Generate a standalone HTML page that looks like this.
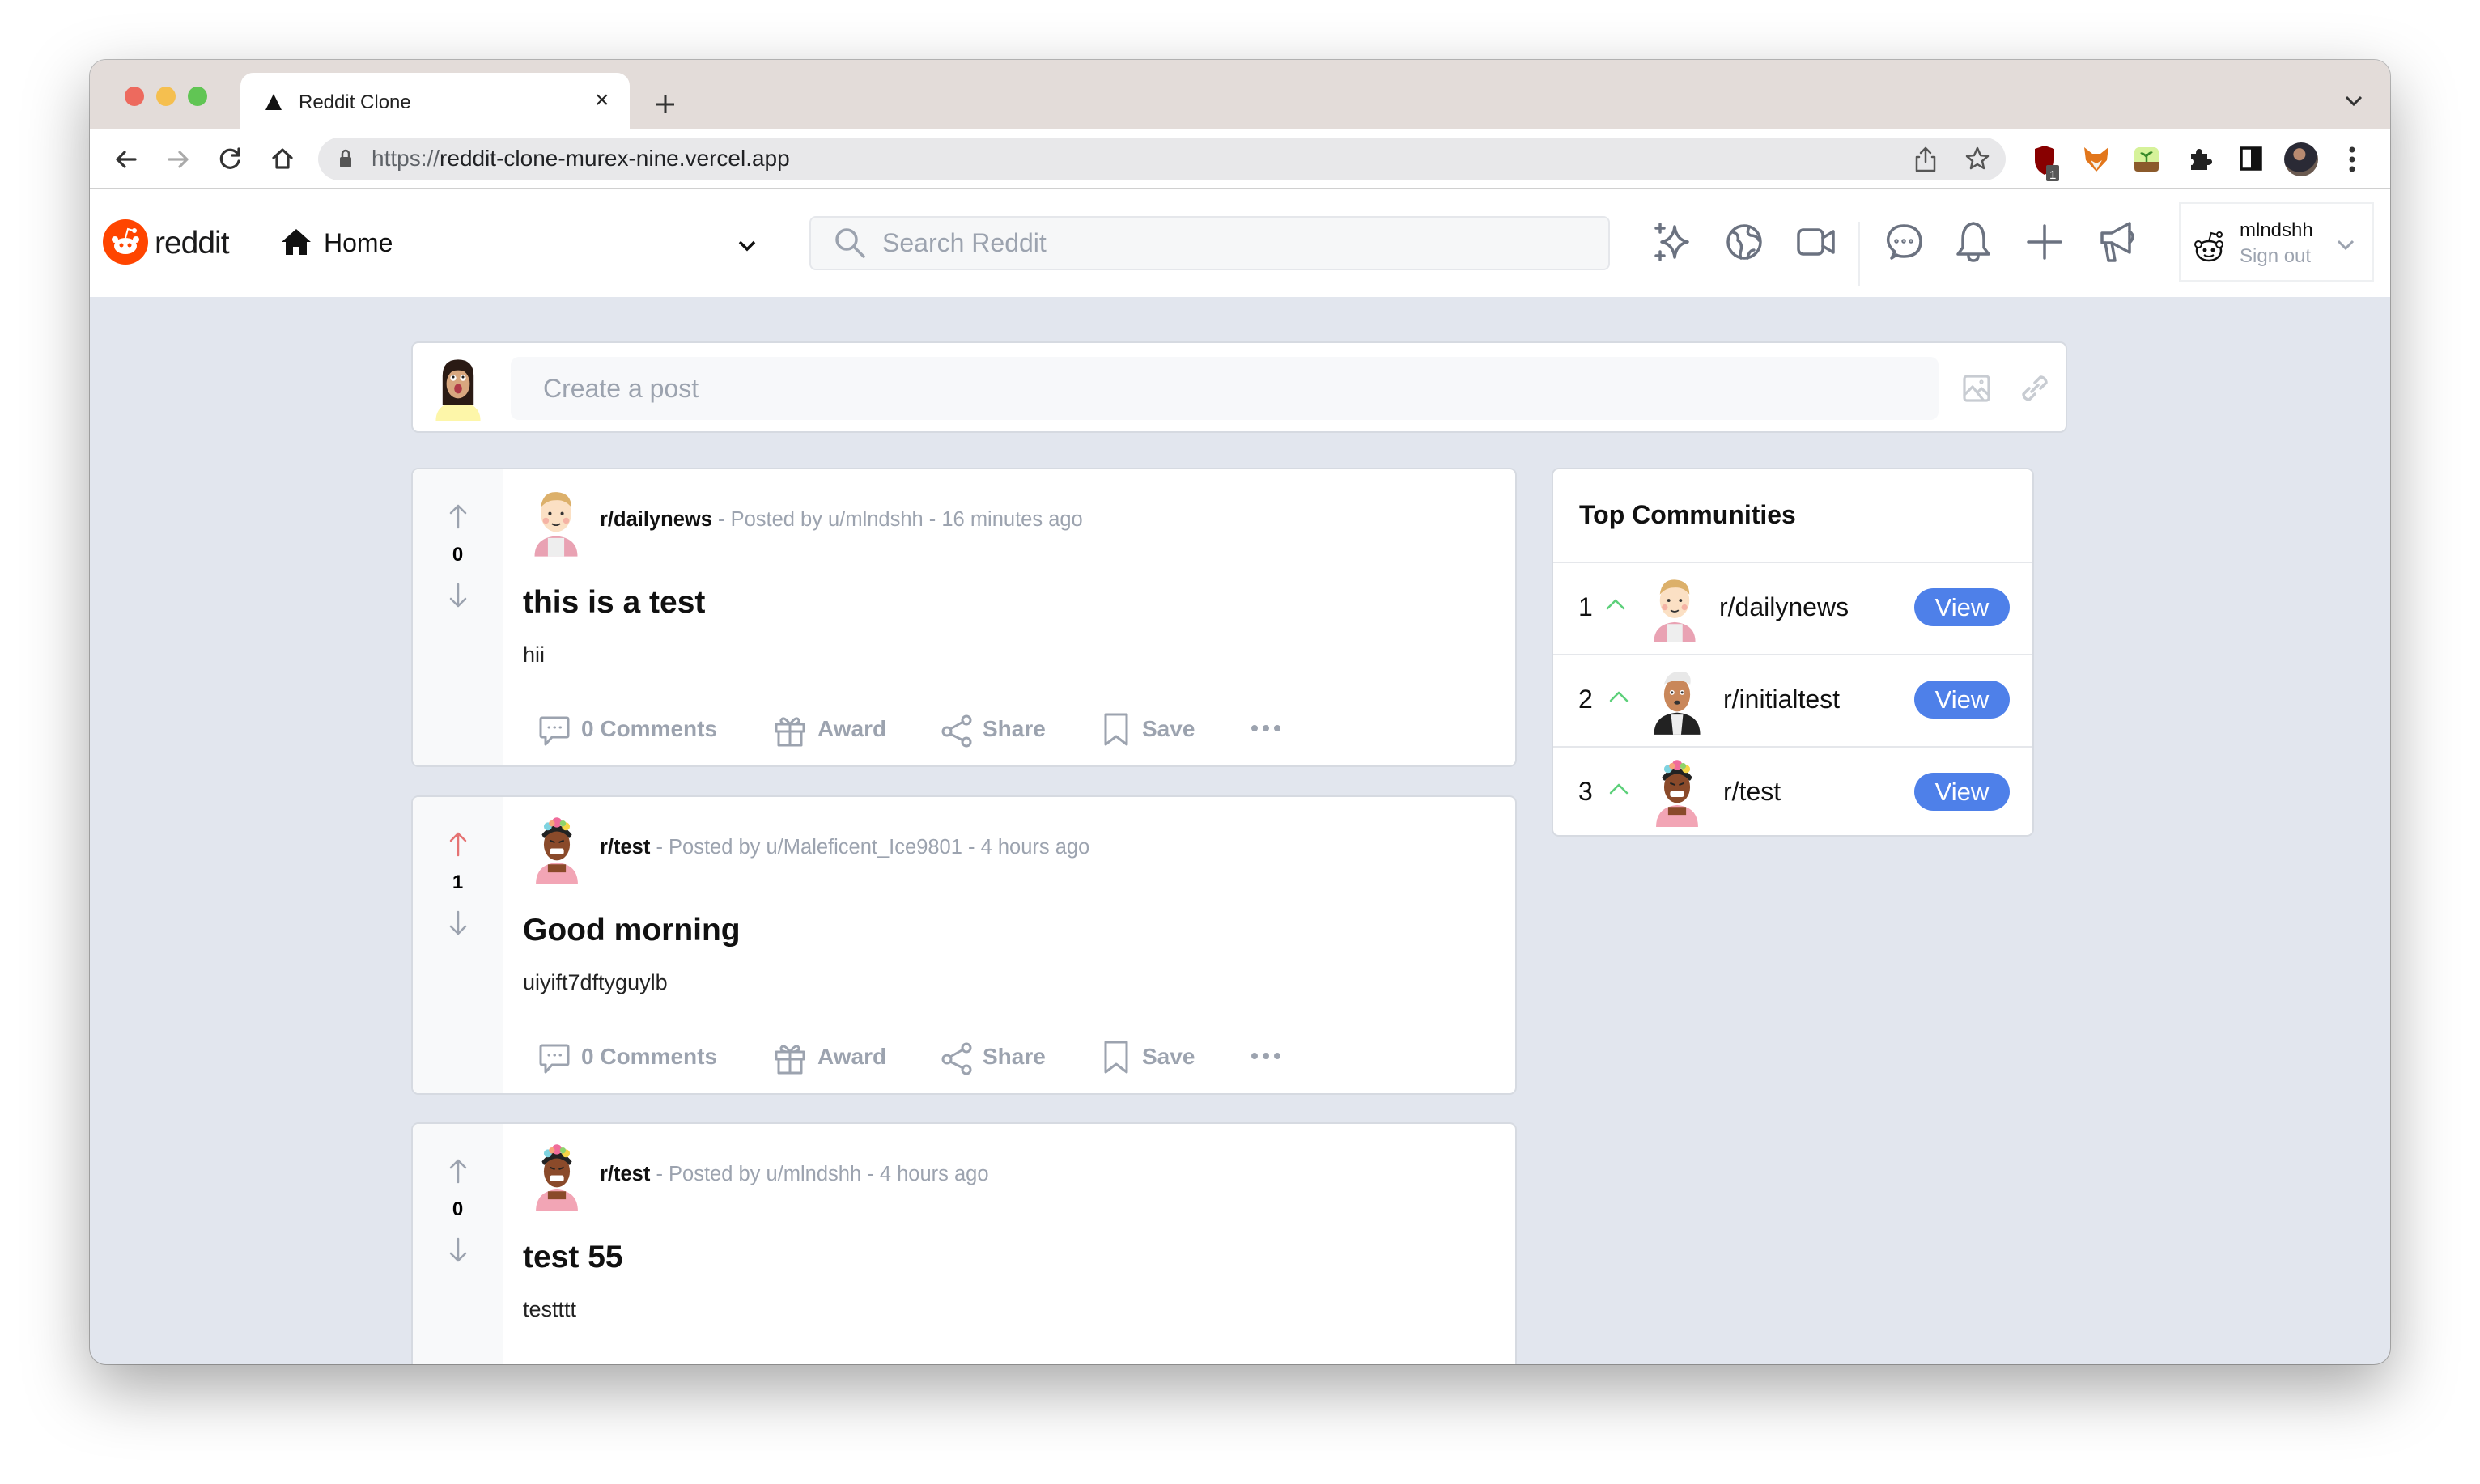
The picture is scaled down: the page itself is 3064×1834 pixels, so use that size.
<!DOCTYPE html>
<html><head><meta charset="utf-8"><style>
*{box-sizing:border-box;margin:0;padding:0}
body{width:3064px;height:1834px;background:#fff;position:relative;overflow:hidden;font-family:"Liberation Sans",sans-serif}
.abs{position:absolute}
#win{position:absolute;left:111px;top:74px;width:2842px;height:1612px;border-radius:20px;overflow:hidden;background:#e2e6ee;box-shadow:0 30px 80px rgba(0,0,0,.35),0 0 0 1px rgba(0,0,0,.25)}
.ic{position:absolute;fill:none;stroke:#6b7280;stroke-width:3.2;stroke-linecap:round;stroke-linejoin:round}
.card{position:absolute;background:#fff;border:2px solid #d6dae1;border-radius:9px;overflow:hidden}
.vote{position:absolute;left:0;top:0;bottom:0;width:111px;background:#f8f9fa}
.meta{position:absolute;font-size:25.5px;color:#9ca3af;white-space:nowrap}
.meta b{color:#111}
.title{position:absolute;font-size:39px;font-weight:bold;color:#111}
.body{position:absolute;font-size:27px;color:#222}
.act{position:absolute;font-size:28px;font-weight:bold;color:#9ca3af;white-space:nowrap}
.cnt{position:absolute;font-size:24px;font-weight:bold;width:111px;text-align:center}
.view{position:absolute;left:446px;width:118px;height:47px;border-radius:24px;background:#4e80e9;color:#fff;font-size:31px;text-align:center;line-height:47px}
.cr{position:absolute;left:0;width:100%;height:114px;border-top:2px solid #e5e7eb;font-size:32px;color:#111}
</style></head><body>
<svg width="0" height="0" style="position:absolute">
<defs>
<symbol id="blond" viewBox="12 4 46 66">
<path d="M14 70 Q14 52 35 50 Q56 52 56 70Z" fill="#e9a2b3"/><path d="M27 52 h16 v18 h-16z" fill="#eee"/>
<ellipse cx="35" cy="28" rx="15" ry="18" fill="#fbe0c4"/><path d="M20 22 Q22 6 36 7 Q50 8 50 22 Q44 14 34 15 Q26 15 20 22Z" fill="#dcb06a"/>
<circle cx="29" cy="28" r="1.6" fill="#333"/><circle cx="41" cy="28" r="1.6" fill="#333"/><circle cx="25" cy="35" r="3" fill="#f5b3a5"/><circle cx="45" cy="35" r="3" fill="#f5b3a5"/><path d="M31 38 q4 3 8 0" stroke="#333" stroke-width="1.4" fill="none"/>
</symbol>
<symbol id="girl" viewBox="12 2 46 68">
<path d="M14 70 Q14 50 35 48 Q56 50 56 70Z" fill="#f2a5b5"/><path d="M26 50 h18 v8 h-18z" fill="#8a4a2a"/>
<ellipse cx="35" cy="30" rx="13" ry="16" fill="#8a4a2a"/><path d="M20 20 Q35 2 50 20 Q48 26 46 22 Q35 12 24 22 Q22 26 20 20Z" fill="#222"/>
<circle cx="26" cy="12" r="4" fill="#7fd3e0"/><circle cx="35" cy="8" r="5" fill="#f06c9b"/><circle cx="44" cy="12" r="4" fill="#f5d547"/><circle cx="30" cy="9" r="3" fill="#f6a57a"/><circle cx="41" cy="9" r="3" fill="#8ed36b"/>
<rect x="28" y="34" width="14" height="6" rx="2" fill="#fff"/><path d="M28 26 l5 2 M42 26 l-5 2" stroke="#222" stroke-width="1.6"/>
</symbol>
<symbol id="man" viewBox="10 4 50 66">
<path d="M12 70 Q12 50 35 48 Q58 50 58 70Z" fill="#222"/><path d="M29 50 h12 l-2 20 h-8z" fill="#eee"/>
<ellipse cx="35" cy="30" rx="13" ry="17" fill="#c9875a"/><path d="M22 20 Q26 4 44 8 Q50 12 48 20 Q36 12 22 20Z" fill="#e8e8e8"/>
<circle cx="30" cy="28" r="2.4" fill="#fff"/><circle cx="40" cy="28" r="2.4" fill="#fff"/><circle cx="30" cy="28" r="1.2" fill="#333"/><circle cx="40" cy="28" r="1.2" fill="#333"/><ellipse cx="35" cy="38" rx="3" ry="2" fill="#333"/>
</symbol>
<symbol id="woman" viewBox="10 5 50 65">
<path d="M12 70 Q12 52 35 50 Q58 52 58 70Z" fill="#fdf6a9"/>
<path d="M19 54 V24 Q19 7 35 7 Q51 7 51 24 V54Z" fill="#2a1a14"/>
<ellipse cx="35" cy="32" rx="12" ry="15" fill="#d8a77f"/><path d="M23 22 Q35 14 47 22 V18 Q35 10 23 18Z" fill="#2a1a14"/>
<circle cx="30" cy="26" r="3" fill="#fff"/><circle cx="40" cy="26" r="3" fill="#fff"/><circle cx="30" cy="25" r="1.3" fill="#222"/><circle cx="40" cy="25" r="1.3" fill="#222"/><ellipse cx="35" cy="37" rx="4" ry="5" fill="#b03a48"/>
</symbol>
</defs></svg>

<div id="win">
<div class="abs" style="left:0;top:0;width:2842px;height:86px;background:#e3dcd9"></div>
<div class="abs" style="left:43px;top:33px;width:24px;height:24px;border-radius:50%;background:#ed6a5e"></div>
<div class="abs" style="left:82px;top:33px;width:24px;height:24px;border-radius:50%;background:#f5bf4f"></div>
<div class="abs" style="left:121px;top:33px;width:24px;height:24px;border-radius:50%;background:#61c554"></div>
<div class="abs" style="left:186px;top:16px;width:481px;height:72px;background:#fff;border-radius:16px 16px 0 0"></div>
<svg class="abs" style="left:216px;top:41px" width="22" height="22"><path d="M11 1 L21 21 H1Z" fill="#111"/></svg>
<div class="abs" style="left:258px;top:39px;font-size:24px;color:#222">Reddit Clone</div>
<div class="abs" style="left:624px;top:33px;font-size:30px;color:#222">×</div>
<svg class="abs" style="left:698px;top:42px" width="26" height="26"><path d="M13 2V24M2 13H24" stroke="#333" stroke-width="3"/></svg>
<svg class="abs" style="left:2786px;top:44px" width="22" height="14"><path d="M2 2 L11 11 L20 2" stroke="#333" stroke-width="3" fill="none"/></svg>
<div class="abs" style="left:0;top:86px;width:2842px;height:74px;background:#fff;border-bottom:2px solid #d0d0d0"></div>
<svg class="ic" style="left:30px;top:108px;stroke:#333" width="30" height="30"><path d="M26 15H4M13 6L4 15L13 24"/></svg>
<svg class="ic" style="left:94px;top:108px;stroke:#aaa" width="30" height="30"><path d="M4 15H26M17 6L26 15L17 24"/></svg>
<svg class="ic" style="left:158px;top:106px;stroke:#333" width="32" height="32"><path d="M25 11A11 11 0 1 0 26 19"/><path d="M26 4V12H18" /></svg>
<svg class="ic" style="left:222px;top:106px;stroke:#333" width="32" height="32"><path d="M5 15L16 5L27 15M9 12V27H23V12"/></svg>
<div class="abs" style="left:282px;top:96px;width:2085px;height:53px;border-radius:27px;background:#e8e8ea"></div>
<svg class="abs" style="left:308px;top:110px" width="16" height="24"><path d="M4 10V6a4 4 0 0 1 8 0v4" stroke="#555" stroke-width="2.5" fill="none"/><rect x="1" y="10" width="14" height="13" rx="2" fill="#555"/></svg>
<div class="abs" style="left:348px;top:106px;font-size:28px;color:#202124"><span style="color:#5f6368">https://</span>reddit-clone-murex-nine.vercel.app</div>
<svg class="ic" style="left:2254px;top:106px;stroke:#555;stroke-width:2.5" width="28" height="34"><path d="M14 20V3M8 9L14 3L20 9M6 14H3V31H25V14H22"/></svg>
<svg class="ic" style="left:2316px;top:106px;stroke:#555;stroke-width:2.5" width="32" height="32"><path d="M16 3L20 12L29 13L22 19L24 28L16 23L8 28L10 19L3 13L12 12Z"/></svg>
<svg class="abs" style="left:2400px;top:104px" width="34" height="46"><path d="M3 6L15 2L27 6V20Q27 32 15 38Q3 32 3 20Z" fill="#800"/><rect x="17" y="26" width="16" height="20" rx="2" fill="#555"/><text x="21" y="43" font-size="15" fill="#fff" font-family="Liberation Sans">1</text></svg>
<svg class="abs" style="left:2462px;top:106px" width="34" height="34"><path d="M2 2L12 10H22L32 2L30 18L17 32L4 18Z" fill="#e2761b"/><path d="M10 18L17 30L24 18L17 22Z" fill="#f6f1e9"/></svg>
<svg class="abs" style="left:2524px;top:106px" width="34" height="34"><rect x="2" y="2" width="30" height="30" rx="6" fill="#d6f29a"/><path d="M2 20H32V28Q32 32 28 32H6Q2 32 2 28Z" fill="#8b5a2b"/><path d="M17 20V10M17 14Q12 8 10 10M17 13Q22 7 24 9" stroke="#3a8a2a" stroke-width="2.5" fill="none"/></svg>
<svg class="abs" style="left:2590px;top:106px" width="32" height="32"><path d="M6 10H12Q12 4 16 4Q20 4 20 10H26V16Q32 16 32 20Q32 24 26 24V30H6V24Q10 24 10 20Q10 16 6 16Z" fill="#222"/></svg>
<svg class="abs" style="left:2656px;top:107px" width="28" height="30"><rect x="2" y="2" width="24" height="26" fill="none" stroke="#111" stroke-width="3.5"/><rect x="14" y="2" width="12" height="26" fill="#111"/></svg>
<div class="abs" style="left:2711px;top:102px;width:42px;height:42px;border-radius:50%;background:radial-gradient(circle at 45% 35%,#b88a70 0 20%,#2a2a35 22% 60%,#6a5a50 62%)"></div>
<svg class="abs" style="left:2790px;top:106px" width="10" height="34"><circle cx="5" cy="5" r="3.5" fill="#333"/><circle cx="5" cy="17" r="3.5" fill="#333"/><circle cx="5" cy="29" r="3.5" fill="#333"/></svg>

<div class="abs" style="left:0;top:160px;width:2842px;height:133px;background:#fff"></div>
<svg class="abs" style="left:16px;top:197px" width="56" height="56"><circle cx="28" cy="28" r="28" fill="#ff4500"/><ellipse cx="28" cy="33" rx="14" ry="10" fill="#fff"/><circle cx="15" cy="25" r="4" fill="#fff"/><circle cx="41" cy="25" r="4" fill="#fff"/><circle cx="23" cy="32" r="2.5" fill="#ff4500"/><circle cx="33" cy="32" r="2.5" fill="#ff4500"/><path d="M28 23L31 12L38 14" stroke="#fff" stroke-width="2" fill="none"/><circle cx="39" cy="14" r="3" fill="#fff"/></svg>
<div class="abs" style="left:80px;top:205px;font-size:39px;color:#1a1a1b;letter-spacing:-1px">reddit</div>
<svg class="abs" style="left:236px;top:207px" width="38" height="36"><path d="M19 2L37 18H32V34H23V24H15V34H6V18H1Z" fill="#111"/></svg>
<div class="abs" style="left:289px;top:208px;font-size:32px;color:#111">Home</div>
<svg class="abs" style="left:800px;top:222px" width="24" height="16"><path d="M3 3L12 12L21 3" stroke="#111" stroke-width="3.5" fill="none"/></svg>
<div class="abs" style="left:889px;top:193px;width:989px;height:67px;border-radius:8px;background:#f6f7f8;border:2px solid #e5e7eb"></div>
<svg class="ic" style="left:918px;top:205px;stroke:#9ca3af;stroke-width:3.5" width="44" height="44"><circle cx="17" cy="17" r="12"/><path d="M26 26L38 38"/></svg>
<div class="abs" style="left:979px;top:208px;font-size:32px;color:#9ca3af">Search Reddit</div>
<svg class="ic" style="left:1932px;top:200px;stroke-width:3.5" width="48" height="50"><path d="M26 6Q28 22 42 25Q28 28 26 44Q24 28 10 25Q24 22 26 6Z"/><path d="M8 3V13M3 8H13M8 37V47M3 42H13"/></svg>
<svg class="ic" style="left:2020px;top:201px;stroke-width:3.5" width="48" height="48"><circle cx="24" cy="24" r="20"/><path d="M10 12Q18 14 16 22Q22 26 20 34Q18 40 20 44M30 6Q26 14 32 16Q40 16 42 22M28 44Q30 34 36 34"/></svg>
<svg class="ic" style="left:2108px;top:205px;stroke-width:3.5" width="50" height="40"><rect x="3" y="5" width="30" height="30" rx="6"/><path d="M33 15L46 7V33L33 25"/></svg>
<div class="abs" style="left:2185px;top:200px;width:2px;height:80px;background:#eceef1"></div>
<svg class="ic" style="left:2216px;top:201px;stroke-width:3.5" width="50" height="50"><path d="M10 44L14 36Q4 28 6 18Q10 4 25 4Q44 4 46 22Q46 42 25 42Q19 42 16 40Z"/><circle cx="16" cy="23" r="1" /><circle cx="25" cy="23" r="1"/><circle cx="34" cy="23" r="1"/></svg>
<svg class="ic" style="left:2304px;top:198px;stroke-width:3.5" width="46" height="54"><path d="M23 4Q36 6 36 24V34L42 42H4L10 34V24Q10 6 23 4Z"/><path d="M17 44Q17 50 23 50Q29 50 29 44"/></svg>
<svg class="ic" style="left:2392px;top:202px;stroke-width:3.5" width="46" height="46"><path d="M23 3V43M3 23H43"/></svg>
<svg class="ic" style="left:2480px;top:198px;stroke-width:3.5" width="50" height="54"><path d="M6 16H18L40 4V40L18 28H6Z"/><path d="M10 28L14 50H22L18 28"/><path d="M40 14Q48 20 40 28"/></svg>
<div class="abs" style="left:2581px;top:176px;width:241px;height:98px;border:2px solid #eef0f2"></div>
<svg class="abs" style="left:2598px;top:210px" width="42" height="42"><ellipse cx="20" cy="26" rx="15" ry="12" fill="#fff" stroke="#111" stroke-width="2.5"/><circle cx="7" cy="18" r="4" fill="#fff" stroke="#111" stroke-width="2"/><circle cx="33" cy="18" r="4" fill="#fff" stroke="#111" stroke-width="2"/><circle cx="15" cy="25" r="2.5" fill="#111"/><circle cx="25" cy="25" r="2.5" fill="#111"/><path d="M14 31Q20 35 26 31" stroke="#111" stroke-width="2" fill="none"/><path d="M20 14L23 4L30 6" stroke="#111" stroke-width="2" fill="none"/><circle cx="33" cy="6" r="3" fill="#fff" stroke="#111" stroke-width="2"/></svg>
<div class="abs" style="left:2656px;top:197px;font-size:24px;color:#111">mlndshh</div>
<div class="abs" style="left:2656px;top:229px;font-size:24px;color:#9ca3af">Sign out</div>
<svg class="abs" style="left:2776px;top:222px" width="22" height="14"><path d="M2 2L11 11L20 2" stroke="#9ca3af" stroke-width="3" fill="none"/></svg>

<div class="card" style="left:397px;top:348px;width:2046px;height:113px">
 <svg class="abs" style="left:26px;top:18px" width="60" height="78"><use href="#woman"/></svg>
 <div class="abs" style="left:121px;top:17px;width:1764px;height:78px;border-radius:10px;background:#f7f8fa"></div>
 <div class="abs" style="left:161px;top:38px;font-size:32px;color:#9ca3af">Create a post</div>
 <svg class="ic" style="left:1914px;top:38px;stroke:#c8ccd2" width="36" height="36"><rect x="3" y="3" width="30" height="30" rx="3"/><path d="M3 26L13 16L26 32M20 22L24 18L33 26"/><circle cx="24" cy="10" r="1"/></svg>
 <svg class="ic" style="left:1982px;top:34px;stroke:#c8ccd2;stroke-width:3.5" width="44" height="44"><path d="M18 26L26 18M15 22L8 29A7 7 0 0 0 15 36L22 29M29 22L36 15A7 7 0 0 0 29 8L22 15"/></svg>
</div>

<div class="card" style="left:397px;top:504px;width:1366px;height:370px">
 <div class="vote"></div>
 <svg class="ic" style="left:42px;top:42px;stroke:#9ca3af;stroke-width:2.5" width="28" height="32"><path d="M14 30V3M5 12L14 3L23 12"/></svg>
 <div class="cnt" style="left:0;top:92px">0</div>
 <svg class="ic" style="left:42px;top:140px;stroke:#9ca3af;stroke-width:2.5" width="28" height="32"><path d="M14 2V29M5 20L14 29L23 20"/></svg>
 <svg class="abs" style="left:148px;top:24px" width="58" height="84"><use href="#blond"/></svg>
 <div class="meta" style="left:231px;top:48px"><b>r/dailynews</b> - Posted by u/mlndshh - 16 minutes ago</div>
 <div class="title" style="left:136px;top:143px">this is a test</div>
 <div class="body" style="left:136px;top:214px">hii</div>
 <svg class="ic" style="left:155px;top:304px;stroke:#9ca3af;stroke-width:3" width="40" height="42"><path d="M5 3H35Q37 3 37 5V25Q37 27 35 27H17L9 36V27H5Q3 27 3 25V5Q3 3 5 3Z"/><path d="M13 15h.5M20 15h.5M27 15h.5"/></svg>
 <div class="act" style="left:208px;top:305px">0 Comments</div>
 <svg class="ic" style="left:446px;top:302px;stroke:#9ca3af;stroke-width:3" width="40" height="42"><rect x="3" y="13" width="34" height="9"/><path d="M6 22V39H34V22M20 13V39M20 13Q12 2 9 8Q8 13 20 13Q32 13 31 8Q28 2 20 13"/></svg>
 <div class="act" style="left:500px;top:305px">Award</div>
 <svg class="ic" style="left:652px;top:302px;stroke:#9ca3af;stroke-width:3" width="42" height="42"><circle cx="8" cy="22" r="5"/><circle cx="32" cy="8" r="5"/><circle cx="32" cy="35" r="5"/><path d="M12 19L28 10M12 25L28 33"/></svg>
 <div class="act" style="left:704px;top:305px">Share</div>
 <svg class="ic" style="left:852px;top:300px;stroke:#9ca3af;stroke-width:3" width="34" height="44"><path d="M4 3H30V40L17 30L4 40Z"/></svg>
 <div class="act" style="left:901px;top:305px">Save</div>
 <svg class="abs" style="left:1034px;top:314px" width="40" height="12"><circle cx="6" cy="6" r="4" fill="#9ca3af"/><circle cx="20" cy="6" r="4" fill="#9ca3af"/><circle cx="34" cy="6" r="4" fill="#9ca3af"/></svg>
</div>

<div class="card" style="left:397px;top:909px;width:1366px;height:370px">
 <div class="vote"></div>
 <svg class="ic" style="left:42px;top:42px;stroke:#e57373;stroke-width:2.5" width="28" height="32"><path d="M14 30V3M5 12L14 3L23 12"/></svg>
 <div class="cnt" style="left:0;top:92px">1</div>
 <svg class="ic" style="left:42px;top:140px;stroke:#9ca3af;stroke-width:2.5" width="28" height="32"><path d="M14 2V29M5 20L14 29L23 20"/></svg>
 <svg class="abs" style="left:148px;top:24px" width="60" height="84"><use href="#girl"/></svg>
 <div class="meta" style="left:231px;top:48px"><b>r/test</b> - Posted by u/Maleficent_Ice9801 - 4 hours ago</div>
 <div class="title" style="left:136px;top:143px">Good morning</div>
 <div class="body" style="left:136px;top:214px">uiyift7dftyguylb</div>
 <svg class="ic" style="left:155px;top:304px;stroke:#9ca3af;stroke-width:3" width="40" height="42"><path d="M5 3H35Q37 3 37 5V25Q37 27 35 27H17L9 36V27H5Q3 27 3 25V5Q3 3 5 3Z"/><path d="M13 15h.5M20 15h.5M27 15h.5"/></svg>
 <div class="act" style="left:208px;top:305px">0 Comments</div>
 <svg class="ic" style="left:446px;top:302px;stroke:#9ca3af;stroke-width:3" width="40" height="42"><rect x="3" y="13" width="34" height="9"/><path d="M6 22V39H34V22M20 13V39M20 13Q12 2 9 8Q8 13 20 13Q32 13 31 8Q28 2 20 13"/></svg>
 <div class="act" style="left:500px;top:305px">Award</div>
 <svg class="ic" style="left:652px;top:302px;stroke:#9ca3af;stroke-width:3" width="42" height="42"><circle cx="8" cy="22" r="5"/><circle cx="32" cy="8" r="5"/><circle cx="32" cy="35" r="5"/><path d="M12 19L28 10M12 25L28 33"/></svg>
 <div class="act" style="left:704px;top:305px">Share</div>
 <svg class="ic" style="left:852px;top:300px;stroke:#9ca3af;stroke-width:3" width="34" height="44"><path d="M4 3H30V40L17 30L4 40Z"/></svg>
 <div class="act" style="left:901px;top:305px">Save</div>
 <svg class="abs" style="left:1034px;top:314px" width="40" height="12"><circle cx="6" cy="6" r="4" fill="#9ca3af"/><circle cx="20" cy="6" r="4" fill="#9ca3af"/><circle cx="34" cy="6" r="4" fill="#9ca3af"/></svg>
</div>

<div class="card" style="left:397px;top:1313px;width:1366px;height:370px">
 <div class="vote"></div>
 <svg class="ic" style="left:42px;top:42px;stroke:#9ca3af;stroke-width:2.5" width="28" height="32"><path d="M14 30V3M5 12L14 3L23 12"/></svg>
 <div class="cnt" style="left:0;top:92px">0</div>
 <svg class="ic" style="left:42px;top:140px;stroke:#9ca3af;stroke-width:2.5" width="28" height="32"><path d="M14 2V29M5 20L14 29L23 20"/></svg>
 <svg class="abs" style="left:148px;top:24px" width="60" height="84"><use href="#girl"/></svg>
 <div class="meta" style="left:231px;top:48px"><b>r/test</b> - Posted by u/mlndshh - 4 hours ago</div>
 <div class="title" style="left:136px;top:143px">test 55</div>
 <div class="body" style="left:136px;top:214px">testttt</div>
</div>

<div class="card" style="left:1806px;top:504px;width:596px;height:456px">
 <div class="abs" style="left:32px;top:38px;font-size:32px;font-weight:bold;color:#111">Top Communities</div>
 <div class="cr" style="top:114px">
  <div class="abs" style="left:31px;top:36px">1</div>
  <svg class="ic" style="left:64px;top:42px;stroke:#5dd07a;stroke-width:2.5" width="26" height="18"><path d="M3 14L13 4L23 14"/></svg>
  <svg class="abs" style="left:122px;top:16px" width="56" height="82"><use href="#blond"/></svg>
  <div class="abs" style="left:205px;top:36px">r/dailynews</div>
  <div class="view" style="top:31px">View</div>
 </div>
 <div class="cr" style="top:228px">
  <div class="abs" style="left:31px;top:36px">2</div>
  <svg class="ic" style="left:68px;top:42px;stroke:#5dd07a;stroke-width:2.5" width="26" height="18"><path d="M3 14L13 4L23 14"/></svg>
  <svg class="abs" style="left:122px;top:16px" width="62" height="82"><use href="#man"/></svg>
  <div class="abs" style="left:210px;top:36px">r/initialtest</div>
  <div class="view" style="top:31px">View</div>
 </div>
 <div class="cr" style="top:342px">
  <div class="abs" style="left:31px;top:36px">3</div>
  <svg class="ic" style="left:68px;top:42px;stroke:#5dd07a;stroke-width:2.5" width="26" height="18"><path d="M3 14L13 4L23 14"/></svg>
  <svg class="abs" style="left:124px;top:14px" width="58" height="84"><use href="#girl"/></svg>
  <div class="abs" style="left:210px;top:36px">r/test</div>
  <div class="view" style="top:31px">View</div>
 </div>
</div>
</div>
</body></html>
